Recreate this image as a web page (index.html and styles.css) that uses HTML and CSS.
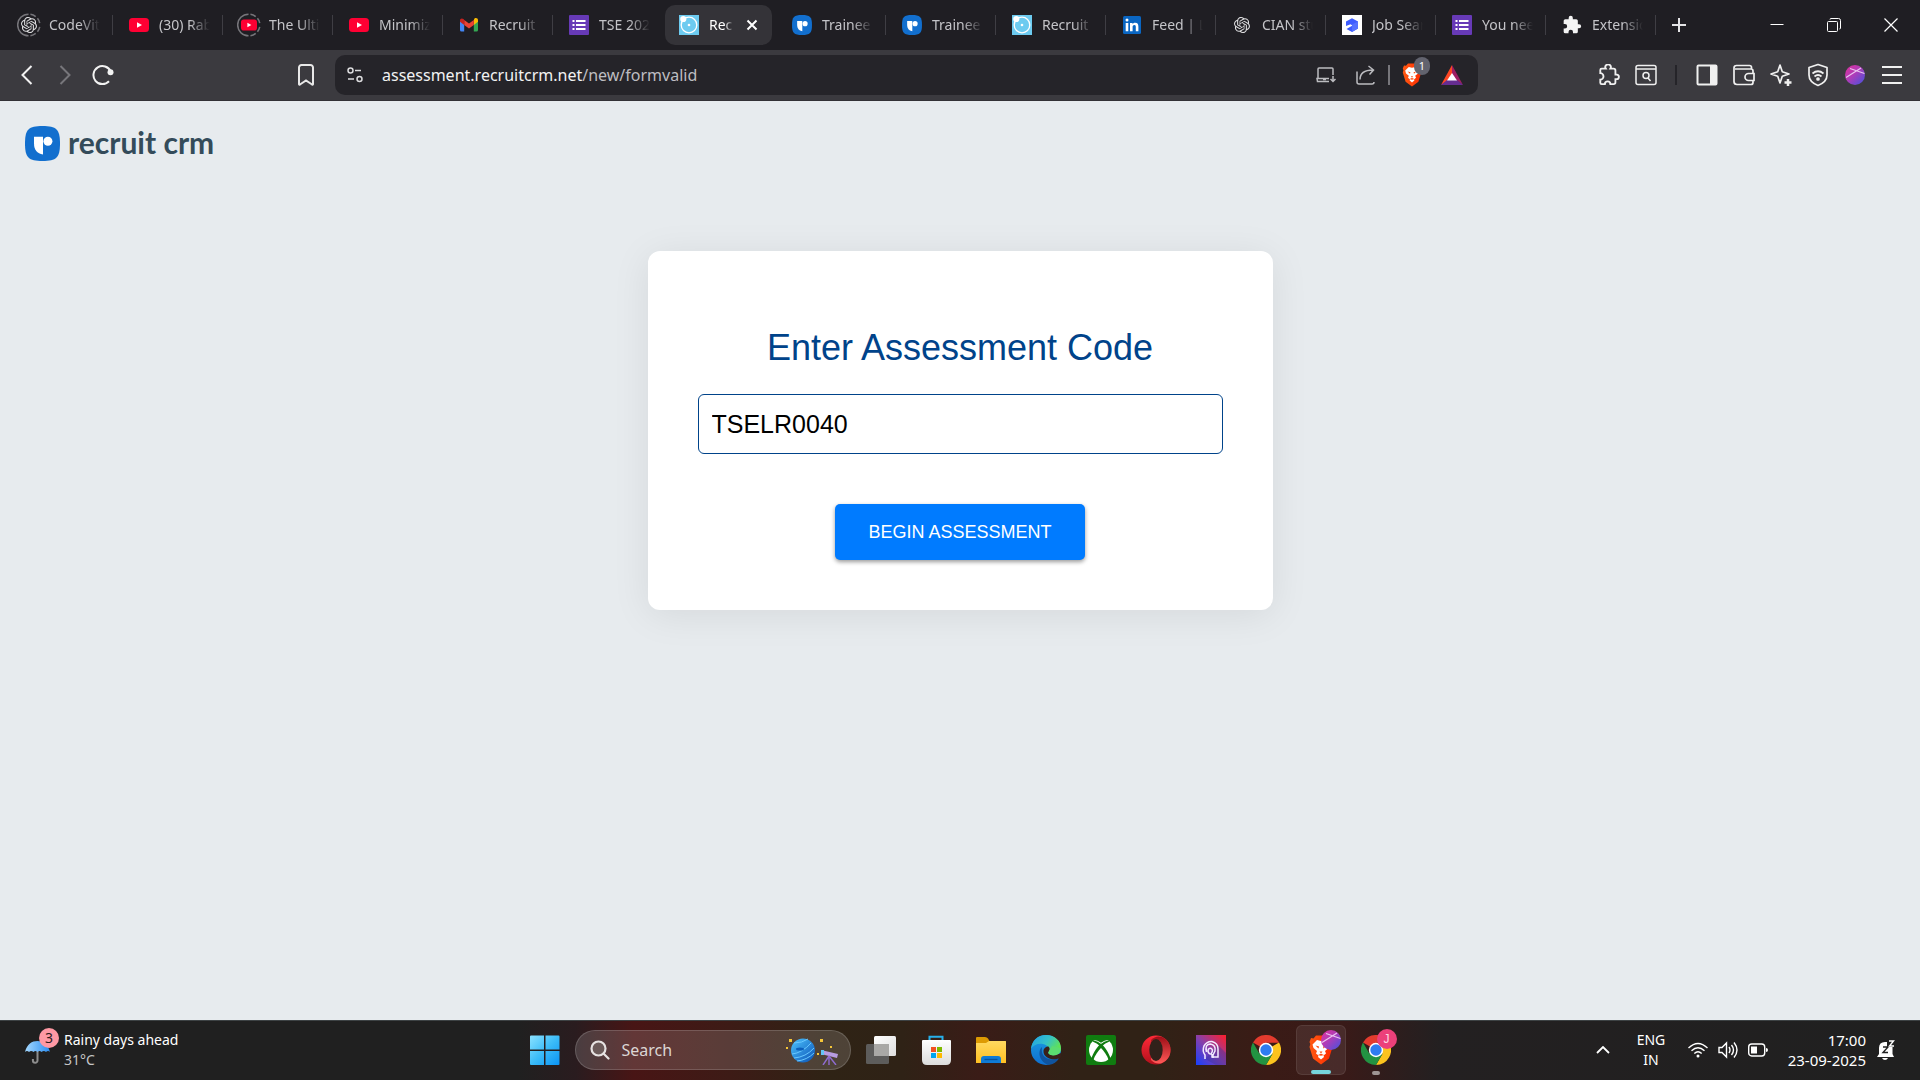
FILE: index.html
```html
<!DOCTYPE html>
<html lang="en">
<head>
<meta charset="utf-8">
<title>Recruit CRM Assessment</title>
<link rel="stylesheet" href="styles.css">
</head>
<body>
<svg class="sprite" aria-hidden="true">
  <defs>
    <linearGradient id="g-win" x1="0" y1="0" x2="1" y2="1"><stop offset="0" stop-color="#8be2ff"/><stop offset=".5" stop-color="#3cbcf8"/><stop offset="1" stop-color="#0a93f5"/></linearGradient>
    <linearGradient id="g-avatar" x1="0" y1="0" x2="1" y2="1"><stop offset="0" stop-color="#e0309a"/><stop offset=".45" stop-color="#b03cb8"/><stop offset="1" stop-color="#3f53e0"/></linearGradient>
    <linearGradient id="g-brave" x1="0" y1="0" x2="1" y2="0"><stop offset="0" stop-color="#ff5a12"/><stop offset="1" stop-color="#ff2a00"/></linearGradient>
    <linearGradient id="g-planet" x1="0" y1="0" x2="1" y2="1"><stop offset="0" stop-color="#4cc4ff"/><stop offset="1" stop-color="#0a50b4"/></linearGradient>
    <linearGradient id="g-umb" x1="0" y1="0" x2="1" y2="0"><stop offset="0" stop-color="#a4d8ff"/><stop offset="1" stop-color="#2b8df0"/></linearGradient>
    <linearGradient id="g-folder" x1="0" y1="0" x2="0" y2="1"><stop offset="0" stop-color="#ffd960"/><stop offset="1" stop-color="#ffbf22"/></linearGradient>
    <linearGradient id="g-bag" x1="0" y1="0" x2="0" y2="1"><stop offset="0" stop-color="#ffffff"/><stop offset="1" stop-color="#dcdcdc"/></linearGradient>
    <linearGradient id="g-edge" x1="0" y1="0" x2="1" y2=".5"><stop offset="0" stop-color="#1f9fe8"/><stop offset=".55" stop-color="#35c1c9"/><stop offset="1" stop-color="#62e44f"/></linearGradient>
    <linearGradient id="g-edge2" x1="0" y1="0" x2="0" y2="1"><stop offset="0" stop-color="#1b9de2"/><stop offset="1" stop-color="#0f6fd0"/></linearGradient>
    <linearGradient id="g-opera" x1="0" y1="0" x2="0" y2="1"><stop offset="0" stop-color="#ff2a38"/><stop offset="1" stop-color="#b3101c"/></linearGradient>
    <linearGradient id="g-opera2" x1="0" y1="0" x2="0" y2="1"><stop offset="0" stop-color="#9c0d16"/><stop offset="1" stop-color="#ff5a58"/></linearGradient>
    <linearGradient id="g-head" x1="0" y1="1" x2="1" y2="0"><stop offset="0" stop-color="#1540ff"/><stop offset=".5" stop-color="#8a3fa8"/><stop offset="1" stop-color="#ff1f2a"/></linearGradient>
    <linearGradient id="g-front" x1="0" y1="0" x2="1" y2="1"><stop offset="0" stop-color="#fff"/><stop offset="1" stop-color="#dedede"/></linearGradient>
  </defs>
  <symbol id="i-openai" viewBox="0 0 24 24"><path fill="#dedee0" d="M22.2819 9.8211a5.9847 5.9847 0 0 0-.5157-4.9108 6.0462 6.0462 0 0 0-6.5098-2.9A6.0651 6.0651 0 0 0 4.9807 4.1818a5.9847 5.9847 0 0 0-3.9977 2.9 6.0462 6.0462 0 0 0 .7427 7.0966 5.98 5.98 0 0 0 .511 4.9107 6.051 6.051 0 0 0 6.5146 2.9001A5.9847 5.9847 0 0 0 13.2599 24a6.0557 6.0557 0 0 0 5.7718-4.2058 5.9894 5.9894 0 0 0 3.9977-2.9001 6.0557 6.0557 0 0 0-.7475-7.0729zm-9.022 12.6081a4.4755 4.4755 0 0 1-2.8764-1.0408l.1419-.0804 4.7783-2.7582a.7948.7948 0 0 0 .3927-.6813v-6.7369l2.02 1.1686a.071.071 0 0 1 .038.052v5.5826a4.504 4.504 0 0 1-4.4945 4.4944zm-9.6607-4.1254a4.4708 4.4708 0 0 1-.5346-3.0137l.142.0852 4.783 2.7582a.7712.7712 0 0 0 .7806 0l5.8428-3.3685v2.3324a.0804.0804 0 0 1-.0332.0615L9.74 19.9502a4.4992 4.4992 0 0 1-6.1408-1.6464zM2.3408 7.8956a4.485 4.485 0 0 1 2.3655-1.9728V11.6a.7664.7664 0 0 0 .3879.6765l5.8144 3.3543-2.0201 1.1685a.0757.0757 0 0 1-.071 0l-4.8303-2.7865A4.504 4.504 0 0 1 2.3408 7.872zm16.5963 3.8558L13.1038 8.364 15.1192 7.2a.0757.0757 0 0 1 .071 0l4.8303 2.7913a4.4944 4.4944 0 0 1-.6765 8.1042v-5.6772a.79.79 0 0 0-.407-.667zm2.0107-3.0231l-.142-.0852-4.7735-2.7818a.7759.7759 0 0 0-.7854 0L9.409 9.2297V6.8974a.0662.0662 0 0 1 .0284-.0615l4.8303-2.7866a4.4992 4.4992 0 0 1 6.6802 4.66zM8.3065 12.863l-2.02-1.1638a.0804.0804 0 0 1-.038-.0567V6.0742a4.4992 4.4992 0 0 1 7.3757-3.4537l-.142.0805L8.704 5.459a.7948.7948 0 0 0-.3927.6813zm1.0976-2.3654l2.602-1.4998 2.6069 1.4998v2.9994l-2.5974 1.4997-2.6067-1.4997Z"/></symbol>
  <symbol id="i-yt" viewBox="0 0 20 20"><rect y="3" width="20" height="14" rx="3.5" fill="#ff0033"/><path d="M8 7.2v5.6l5-2.8z" fill="#fff"/></symbol>
  <symbol id="i-ring" viewBox="0 0 25 25"><path d="M12 1.200A11.300 11.300 0 0 0 12 23.800M14 1.300a11.300 11.300 0 0 1 5.500 2.400M21.300 5.500a11.300 11.300 0 0 1 2.400 5M23.700 14.500a11.300 11.300 0 0 1-2.400 5M19.500 21.300a11.300 11.300 0 0 1-5.500 2.400" fill="none" stroke="#76757a" stroke-width="1.600"/></symbol>
  <symbol id="i-gmail" viewBox="0 0 20 20"><path d="M1 5.500V15a1.500 1.500 0 0 0 1.500 1.500h2.700V8.600z" fill="#4285f4"/><path d="M19 5.500V15a1.500 1.500 0 0 1-1.500 1.500h-2.700V8.600z" fill="#34a853"/><path d="M14.800 5v4.900L19 6.700V5.300c0-2-2.100-2.800-3.500-1.700z" fill="#fbbc04"/><path d="M5.200 9.900V5L10 8.600 14.800 5v4.900L10 13.500z" fill="#ea4335"/><path d="M1 5.300v1.400l4.200 3.200V5l-.7-.9C3 2.800 1 3.500 1 5.300z" fill="#c5221f"/></symbol>
  <symbol id="i-form" viewBox="0 0 20 20"><rect width="20" height="20" rx="1" fill="#673ab7"/><path d="M3.500 5h2v2h-2zM3.500 9h2v2h-2zM3.500 13h2v2h-2zM7 5h9.500v2H7zM7 9h9.500v2H7zM7 13h9.500v2H7z" fill="#fff"/></symbol>
  <symbol id="i-orbit" viewBox="0 0 20 20"><rect width="20" height="20" fill="#6dcbf0"/><circle cx="10" cy="10" r="7.800" fill="none" stroke="#fff" stroke-width="1.300"/><circle cx="10" cy="10" r="1.300" fill="#fff"/><circle cx="4.300" cy="4" r="3.100" fill="#fff"/></symbol>
  <symbol id="i-rcrm" viewBox="0 0 35 35"><path d="M0 17.500C0 3.500 3.500 0 17.500 0S35 3.500 35 17.500 31.500 35 17.500 35 0 31.500 0 17.500z" fill="#126fce"/><path d="M9 10.700h9V28.500C12 27.800 9 23.500 9 17.500z" fill="#fff"/><circle cx="22.900" cy="15.200" r="4.500" fill="#fff"/></symbol>
  <symbol id="i-linkedin" viewBox="0 0 20 20"><rect x="1" y="1" width="18" height="18" rx="1.500" fill="#0a66c2"/><path d="M3.700 8h2.600v8.200H3.700zM8 8h2.500v1.200c.5-.8 1.400-1.400 2.700-1.400 2.500 0 3.200 1.600 3.200 3.900v4.500h-2.600v-4.100c0-1.200-.2-2.100-1.400-2.100s-1.800.9-1.800 2.100v4.100H8z" fill="#fff"/><circle cx="5" cy="5" r="1.500" fill="#fff"/></symbol>
  <symbol id="i-cube" viewBox="0 0 20 20"><rect width="20" height="20" fill="#fff"/><path d="M4 6.500l6-3.300 6 3.300v7l-6 3.500-5.500-3 6-3.500-2-1.300L4 11z" fill="#3d5cff"/><path d="M10 9.500l6-3v7L10 17z" fill="#5471ff"/></symbol>
  <symbol id="i-puzzle" viewBox="0 0 24 24"><path d="M20.500 11H19V7a2 2 0 0 0-2-2h-4V3.500a2.500 2.500 0 0 0-5 0V5H4a2 2 0 0 0-2 2v3.800h1.500a2.700 2.700 0 0 1 0 5.400H2V20a2 2 0 0 0 2 2h3.800v-1.500a2.700 2.700 0 0 1 5.400 0V22H17a2 2 0 0 0 2-2v-4h1.500a2.500 2.500 0 0 0 0-5z"/></symbol>
  <symbol id="i-brave" viewBox="0 0 24 30"><path d="M7 .5h10l2.500 3 2.500-.5 1.500 4-.8 2 .8 3-3.500 11.500L12 29.500 4 23.500.5 12l.8-3-.8-2L2 3l2.500.5z" fill="url(#g-brave)"/><path d="M12 6l4-1 4.500 4.500-1 3.500-3.500 3 1 2.500-2.500 2 .5 1.500-3 2.500-3-2.500.5-1.500L7 18.500 8 16l-3.500-3-1-3.500L8 5z" fill="#fff"/><path d="M6.500 10.500l3.500 1-.5 2zM17.500 10.500l-3.500 1 .5 2zM10.500 16.500h3L12 18.500zM9 20l3-1.200 3 1.200-3 .8z" fill="#ff4a10"/></symbol>
  <symbol id="i-avatar" viewBox="0 0 20 20"><circle cx="10" cy="10" r="10" fill="url(#g-avatar)"/><path d="M1 12.500L16 3M5 3.500l14.500 5" stroke="#e9c3f0" stroke-width="1.200" fill="none"/></symbol>
  <symbol id="i-chrome" viewBox="0 0 30 30"><path d="M15 15L2 7.500A15 15 0 0 1 28 7.500H15z" fill="#e33b2e"/><path d="M15 15L28 7.500A15 15 0 0 1 15 30l6.500-11.200z" fill="#fcc31e"/><path d="M15 15l6.500 3.800L15 30A15 15 0 0 1 2 7.500l6.500 11.200z" fill="#229342"/><path d="M15 7.500h13a15 15 0 0 0-.5-.8L15 5z" fill="#e33b2e"/><circle cx="15" cy="15" r="7.200" fill="#fff"/><circle cx="15" cy="15" r="5.700" fill="#2e7cf0"/></symbol>
</svg>

<header class="browser">
  <div class="tabstrip">
    <nav class="tabs" aria-label="Tabs">
      <a class="tab" href="#"><span class="ring"><svg class="arc"><use href="#i-ring"/></svg><svg class="inner"><use href="#i-openai"/></svg></span><span class="title">CodeVita</span></a>
      <a class="tab" href="#"><svg class="fav"><use href="#i-yt"/></svg><span class="title">(30) Rabb</span></a>
      <a class="tab" href="#"><span class="ring"><svg class="arc"><use href="#i-ring"/></svg><svg class="inner"><use href="#i-yt"/></svg></span><span class="title">The Ultim</span></a>
      <a class="tab" href="#"><svg class="fav"><use href="#i-yt"/></svg><span class="title">Minimize</span></a>
      <a class="tab" href="#"><svg class="fav"><use href="#i-gmail"/></svg><span class="title">Recruit</span></a>
      <a class="tab before-active" href="#"><svg class="fav"><use href="#i-form"/></svg><span class="title">TSE 2025</span></a>
      <div class="tab active"><svg class="fav"><use href="#i-orbit"/></svg><span class="title">Rec</span><button class="tab-close" aria-label="Close tab"><svg viewBox="0 0 12 12"><path d="M1.500 1.500l9 9M10.500 1.500l-9 9" stroke="#fff" stroke-width="2"/></svg></button></div>
      <a class="tab" href="#"><svg class="fav"><use href="#i-rcrm"/></svg><span class="title">Trainee</span></a>
      <a class="tab" href="#"><svg class="fav"><use href="#i-rcrm"/></svg><span class="title">Trainee</span></a>
      <a class="tab" href="#"><svg class="fav"><use href="#i-orbit"/></svg><span class="title">Recruit</span></a>
      <a class="tab" href="#"><svg class="fav"><use href="#i-linkedin"/></svg><span class="title">Feed | Li</span></a>
      <a class="tab" href="#"><svg class="fav pad"><use href="#i-openai"/></svg><span class="title">CIAN stu</span></a>
      <a class="tab" href="#"><svg class="fav"><use href="#i-cube"/></svg><span class="title">Job Sear</span></a>
      <a class="tab" href="#"><svg class="fav"><use href="#i-form"/></svg><span class="title">You need</span></a>
      <a class="tab" href="#"><svg class="fav" fill="#f4f4f4"><use href="#i-puzzle"/></svg><span class="title">Extensions</span></a>
    </nav>
    <button class="new-tab" aria-label="New tab"><svg width="14" height="14" viewBox="0 0 14 14"><path d="M7 0v14M0 7h14" stroke="#e4e4e6" stroke-width="2"/></svg></button>
    <div class="window-controls">
      <button aria-label="Minimize"><svg width="14" height="14" viewBox="0 0 14 14"><path d="M.5 6.500h13" stroke="#fff"/></svg></button>
      <button aria-label="Restore"><svg width="14" height="14" viewBox="0 0 14 14" fill="none" stroke="#fff"><rect x=".5" y="3.500" width="10" height="10" rx="1"/><path d="M3 1.500Q3 .5 4 .5h7.500a2 2 0 0 1 2 2V10q0 1-1 1"/></svg></button>
      <button aria-label="Close"><svg width="14" height="14" viewBox="0 0 14 14"><path d="M.5.500l13 13M13.500.500l-13 13" stroke="#fff" stroke-width="1.200"/></svg></button>
    </div>
  </div>

  <div class="toolbar">
    <div class="nav-buttons">
      <button aria-label="Back"><svg width="12" height="20" viewBox="0 0 12 20"><path d="M10.500 1L1.500 10l9 9" fill="none" stroke="#f2f2f2" stroke-width="2"/></svg></button>
      <button aria-label="Forward"><svg width="12" height="20" viewBox="0 0 12 20"><path d="M1.500 1l9 9-9 9" fill="none" stroke="#77767b" stroke-width="2"/></svg></button>
      <button aria-label="Reload"><svg width="22" height="22" viewBox="0 0 22 22"><path d="M17 17.300A9 9 0 1 1 18.700 7.500" fill="none" stroke="#f2f2f2" stroke-width="2"/><circle cx="18.500" cy="8.300" r="3" fill="#f2f2f2"/></svg></button>
    </div>
    <button class="bookmark" aria-label="Bookmark"><svg width="16" height="22" viewBox="0 0 16 22"><path d="M1 3.500A2.500 2.500 0 0 1 3.500 1h9A2.500 2.500 0 0 1 15 3.500V20q0 1-1 .5L8 16.500l-6 4q-1 .5-1-.5z" fill="none" stroke="#e8e8e8" stroke-width="2"/></svg></button>
    <div class="address">
      <svg width="16" height="16" viewBox="0 0 16 16" fill="none" stroke="#dcdcde" stroke-width="1.500"><circle cx="3.500" cy="3.500" r="2.500"/><path d="M8 3.500h6M1 12h6"/><circle cx="12.500" cy="12" r="2.500"/></svg>
      <a class="url" href="#"><b>assessment.recruitcrm.net</b>/new/formvalid</a>
      <div class="address-actions">
        <button aria-label="Install"><svg width="20" height="16" viewBox="0 0 20 16" fill="none" stroke="#bcbcc0" stroke-width="1.500"><path d="M17 8V2q0-1-1-1H3Q2 1 2 2v9M13 11.500H1l.5 3H13M7 12.500h3M17 9v5M14.500 12l2.500 2.500 2.500-2.500"/></svg></button>
        <button aria-label="Share"><svg width="20" height="20" viewBox="0 0 20 20" fill="none" stroke="#bcbcc0" stroke-width="1.500"><path d="M1 6.500V17q0 2 2 2h13q2 0 2-2M4 14.500C4 9 8 5 17 5M12.500 1L17.500 5l-4 4.500"/></svg></button>
        <i class="divider"></i>
        <button class="shield" aria-label="Brave Shields"><svg width="20" height="24"><use href="#i-brave"/></svg><span class="count">1</span></button>
        <button aria-label="Rewards"><svg width="22" height="20" viewBox="0 0 22 20"><path d="M11 0L0 20l11-7z" fill="#ff4724"/><path d="M11 0l11 20-11-8z" fill="#9e1f63"/><path d="M0 20h22l-6-5H6z" fill="#662d91"/><path d="M11 8l5 7.500H6z" fill="#fff"/></svg></button>
      </div>
    </div>
    <div class="extensions">
      <button aria-label="Extensions"><svg width="22" height="22" viewBox="0 0 24 24" fill="none" stroke="#f0f0f0" stroke-width="2"><path d="M20.500 11.500H19V7a2 2 0 0 0-2-2h-3.500a3 3 0 1 0-5 0H4a1.500 1.500 0 0 0-1.500 1.500V10a3.500 3.500 0 0 1 0 7v3.500A1.500 1.500 0 0 0 4 22h3.500a3 3 0 0 1 6 0H17a2 2 0 0 0 2-2v-3.500h1a2.500 2.500 0 0 0 .5-5z"/></svg></button>
      <button aria-label="Search tabs"><svg width="22" height="22" viewBox="0 0 22 22" fill="none" stroke="#f0f0f0" stroke-width="1.500"><rect x="1" y="1.500" width="20" height="19" rx="2"/><path d="M1 5h20M13 14l2.500 3"/><circle cx="11" cy="11.500" r="3"/></svg></button>
      <i class="divider dark"></i>
      <button aria-label="Sidebar"><svg width="22" height="22" viewBox="0 0 22 22"><rect x="1.500" y="1.500" width="19" height="19" rx="1" fill="none" stroke="#f0f0f0" stroke-width="2"/><path d="M14 2h7v18h-7z" fill="#f0f0f0"/></svg></button>
      <button aria-label="Wallet"><svg width="22" height="22" viewBox="0 0 22 22" fill="none" stroke="#f0f0f0" stroke-width="1.700"><path d="M20 9V7q0-2-2-2H2M18.500 5V3.500q0-2-2-2H3.500q-2.500 0-2.500 2.500v13.500q0 3 3 3h14q2 0 2-2V17"/><path d="M21 9.500h-5.500a3.500 3.500 0 0 0 0 7H21z"/></svg></button>
      <button aria-label="Leo"><svg width="22" height="22" viewBox="0 0 22 22" fill="none" stroke="#f0f0f0" stroke-width="1.700"><path d="M10 1l2.300 6.700L19 10l-6.700 2.300L10 19l-2.300-6.700L1 10l6.700-2.300z" stroke-linejoin="round"/><path d="M18 15v7M14.500 18.500h7" stroke-width="2.500"/></svg></button>
      <button aria-label="VPN"><svg width="22" height="24" viewBox="0 0 22 24" fill="none" stroke="#f0f0f0" stroke-width="1.700"><path d="M11 1.500l9 3V12c0 5-4 8.500-9 10.500C6 20.500 2 17 2 12V4.500z" stroke-linejoin="round"/><path d="M5.500 10.500q5.500-4.500 11 0M7.500 13.500q3.500-3 7 0"/><circle cx="11" cy="16" r="1" fill="#f0f0f0"/></svg></button>
      <button aria-label="Profile"><svg width="20" height="20"><use href="#i-avatar"/></svg></button>
      <button aria-label="Menu"><svg width="20" height="18" viewBox="0 0 20 18"><path d="M0 1h20M0 9h20M0 17h20" stroke="#f0f0f0" stroke-width="2"/></svg></button>
    </div>
  </div>
</header>

<main class="page">
  <a class="logo" href="#"><svg width="35" height="35"><use href="#i-rcrm"/></svg><span>recruit crm</span></a>
  <form class="card">
    <label class="heading" for="code">Enter Assessment Code</label>
    <input class="code" id="code" type="text" value="TSELR0040">
    <button class="begin" type="button">BEGIN ASSESSMENT</button>
  </form>
</main>

<footer class="taskbar">
  <button class="weather">
    <span class="weather-icon"><svg width="26" height="26" viewBox="0 0 26 26"><path d="M12.500 9v13.500a2.300 2.300 0 0 1-4.600 0V21" fill="none" stroke="#8d8d8d" stroke-width="2"/><path d="M0 14C2 6 7 3 12.500 3S23 6 25 14q-2-2-4 0-2-2-4.500 0-2-2-4 0-2-2-4 0-2.500-2-4.500 0-2-2-4 0z" fill="url(#g-umb)"/></svg><span class="badge">3</span></span>
    <span class="stack"><span>Rainy days ahead</span><span class="muted">31°C</span></span>
  </button>
  <nav class="apps" aria-label="Taskbar">
    <button class="app" aria-label="Start"><svg width="30" height="30" viewBox="0 0 30 30"><path d="M0 1.500Q0 .5 1 .5h13v14H0zM15.500.500h13q1 0 1 1v13h-14zM0 16h14v14H1q-1 0-1-1zM15.500 16h14v13q0 1-1 1h-13z" fill="url(#g-win)"/></svg></button>
    <button class="search">
      <svg width="20" height="20" viewBox="0 0 20 20" fill="none" stroke="#e6e2e1" stroke-width="2.200"><circle cx="8.500" cy="8.500" r="7" fill="#6b5a59"/><path d="M13.500 13.500l5 5" stroke-linecap="round"/></svg>
      <span>Search</span>
      <svg class="doodle" width="54" height="30" viewBox="0 0 54 30"><circle cx="18" cy="15.500" r="12" fill="url(#g-planet)"/><path d="M7 19q10-1 19-11M9 23q12-1 20-10M12 26q10-1 17-8M9 8q8 0 14-4" fill="none" stroke="#69c8ff" stroke-width="1"/><ellipse cx="15" cy="14" rx="4" ry="1.500" fill="#0b60bc"/><path d="M4 4h3v3H4zM1 12h2v2H1zM35 4h3v3h-3zM45 11h2v2h-2zM32 18h2v2h-2z" fill="#f5c638"/><path d="M36 15l17 4-1 4-16-4z" fill="#b79ce0"/><path d="M36 15h3v5h-3z" fill="#63c5f5"/><path d="M44 21l-6 9M44 21v9M44 21l7 9" stroke="#8f6cd0" stroke-width="1.400"/></svg>
    </button>
    <button class="app" aria-label="Task view"><svg width="30" height="28" viewBox="0 0 30 28"><rect y="8" width="23" height="20" rx="1.500" fill="#5d5c5b"/><rect x="8" width="22" height="20" rx="1.500" fill="url(#g-front)"/><path d="M8 8h15v12H8z" fill="#a9a8a6"/></svg></button>
    <button class="app" aria-label="Store"><svg width="30" height="30" viewBox="0 0 30 30"><path d="M8.500 7V1.800h13V7" fill="none" stroke="#27b0ea" stroke-width="2"/><path d="M1 6q0-1 1-1h27q1 0 1 1v19q0 5-5 5H6q-5 0-5-5z" fill="url(#g-bag)"/><path d="M10 12h5v5h-5z" fill="#f25022"/><path d="M16 12h5v5h-5z" fill="#7fba00"/><path d="M10 18h5v5h-5z" fill="#00a4ef"/><path d="M16 18h5v5h-5z" fill="#ffb900"/></svg></button>
    <button class="app" aria-label="File Explorer"><svg width="30" height="26" viewBox="0 0 30 26"><path d="M0 1q0-1 1-1h8q2 0 3 1.500L13.500 4H30v8H0z" fill="#dd9a03"/><path d="M0 6h10l3-2h16q1 0 1 1v21H0z" fill="url(#g-folder)"/><path d="M5 26v-4q0-3 3-3h14q3 0 3 3v4z" fill="#0f7bd6"/><path d="M8.500 22.500h13" stroke="#08539c" stroke-width="1.300"/></svg></button>
    <button class="app" aria-label="Edge"><svg width="30" height="30" viewBox="0 0 30 30"><circle cx="15" cy="15" r="15" fill="url(#g-edge2)"/><path d="M0 14C1 5 7 0 15 0c9 0 15 6 15 13 0 5-3.500 7.500-7.500 7.500-4 0-6-1.500-5-3C19 14 17 10 12 9 7 8 2 10 0 14z" fill="url(#g-edge)"/><path d="M11 12c-4 3-4 14 6 17.700 5 .3 9-2.700 11-6.700-8 3.500-19 1-17-11z" fill="#10549f"/><path d="M17.500 11.500c2 2 1.200 4-.3 6 0 3 6 4 12.800.5v4.500q-1 1-2 1c-7 2.500-16-1-15.500-7.500 0-2.500 2.500-4.500 5-4.500z" fill="#39201a"/><path d="M17.200 17.500c1.700 4 9 4 12-.5l.8-4-9-2z" fill="#5bdc70"/></svg></button>
    <button class="app" aria-label="Xbox"><svg width="30" height="30" viewBox="0 0 30 30"><rect width="30" height="30" rx="2" fill="#107c10"/><circle cx="15" cy="15" r="12" fill="#fff"/><path d="M6 5.500Q10 4 15 7.800 20 4 24 5.500L22.500 3 15 1.500 7.500 3z" fill="#107c10"/><path d="M5 25C7 17 12 11 15 8.500 18 11 23 17 25 25l-2 1C21 20 18 16 15 13 12 16 9 20 7 26z" fill="#107c10"/><path d="M8 5.500Q12 6 15 9q3-3 7-3.500l1.500 1Q19 8 16 11h-2Q11 8 6.500 6.500z" fill="#107c10"/></svg></button>
    <button class="app" aria-label="Opera"><svg width="30" height="30" viewBox="0 0 30 30"><circle cx="15" cy="15" r="14.500" fill="url(#g-opera)"/><path d="M10 5q5-5 11-3c5 2 8.500 7 8.500 13s-3.500 11-8.500 13q-6 2-11-3z" fill="url(#g-opera2)"/><ellipse cx="15" cy="15" rx="6.700" ry="11" fill="#30211a"/></svg></button>
    <button class="app" aria-label="Persona"><svg width="30" height="30" viewBox="0 0 30 30"><path d="M0 0h30v30H0z" fill="url(#g-head)"/><path d="M9 24L20 30H30V18L22 10z" fill="#30309a" opacity=".35"/><path d="M9 24v-4q-3-4-1-9 3-5 8-4.500Q22 8 22 14v8h-6v-3M10.500 17q-2-8 4-8 5.500 1 4.500 7l-2 4v3M14 19q-3-2-1.500-5 2.500-2 4 1 0 2-1.500 4z" fill="none" stroke="#f3eaff" stroke-width="1.500"/></svg></button>
    <button class="app" aria-label="Chrome"><svg width="30" height="30"><use href="#i-chrome"/></svg></button>
    <button class="app current" aria-label="Brave"><svg width="26" height="30"><use href="#i-brave"/></svg><svg class="mini" width="20" height="20"><use href="#i-avatar"/></svg></button>
    <button class="app running" aria-label="Chrome profile J"><svg width="30" height="30"><use href="#i-chrome"/></svg><span class="mini initial">J</span></button>
  </nav>
  <div class="tray">
    <button class="chevron" aria-label="Hidden icons"><svg width="14" height="8" viewBox="0 0 14 8"><path d="M1 7l6-6 6 6" fill="none" stroke="#fff" stroke-width="1.800"/></svg></button>
    <button class="stack lang"><span>ENG</span><span>IN</span></button>
    <button class="status" aria-label="Network, volume, battery">
      <svg width="20" height="16" viewBox="0 0 20 16" fill="none" stroke="#fff" stroke-width="1.400"><path d="M.5 6q9.500-9 19 0M3.500 8.800q6.500-6 13 0M6.300 11.500q3.700-3.500 7.400 0"/><circle cx="10" cy="14" r="1.500" fill="#fff" stroke="none"/></svg>
      <svg width="20" height="18" viewBox="0 0 20 18" fill="none" stroke="#fff" stroke-width="1.400"><path d="M1 6.500h3L8.500 2v14L4 11.500H1zM11 6q2 3 0 6M13.500 4q4 5 0 10M16 1.500q6 7.500 0 15"/></svg>
      <svg width="20" height="14" viewBox="0 0 20 14"><rect x=".7" y="1" width="16" height="12" rx="3" fill="none" stroke="#fff" stroke-width="1.400"/><path d="M3 3.500h6v7H3zM18 5q2 0 2 2t-2 2z" fill="#fff"/></svg>
    </button>
    <button class="stack clock"><span>17:00</span><span>23-09-2025</span></button>
    <button class="bell" aria-label="Notifications"><svg width="18" height="20" viewBox="0 0 18 20"><path d="M2 8Q2 2 8 2h2v5h5.500v7l1.500 3H0l2-3z" fill="#fff"/><path d="M5 18h6q-1 2-3 2t-3-2z" fill="#fff"/><path d="M6 7h5l-5 5.500h5" fill="none" stroke="#222" stroke-width="1.400"/><path d="M12 1h4.500L12.500 6H17" fill="none" stroke="#fff" stroke-width="1.400"/></svg></button>
  </div>
</footer>
</body>
</html>
```
FILE: styles.css
```css
* { box-sizing: border-box; }
body {
  margin: 0;
  min-height: 100vh;
  display: flex;
  flex-direction: column;
  background: #e7ebee;
  font-family: "Noto Sans", "Open Sans", sans-serif;
}
button { border: 0; padding: 0; background: none; color: inherit; font: inherit; display: flex; align-items: center; justify-content: center; }
a { color: inherit; text-decoration: none; }
svg { display: block; flex: none; }
.sprite { position: absolute; width: 0; height: 0; }

/* Browser tabs */
.tabstrip { display: flex; height: 50px; padding-left: 3px; background: #1f1e23; }
.tabs { flex: 1; display: flex; align-items: center; min-width: 0; }
.tab {
  flex: 1 1 0;
  min-width: 0;
  height: 20px;
  display: flex;
  align-items: center;
  gap: 10px;
  padding: 0 12px 0 16px;
  border-right: 1px solid #3f3e44;
  color: #c4c4c8;
  font-size: 14px;
  line-height: 20px;
}
.fav { width: 20px; height: 20px; }
.fav.pad { padding: 2px; }
.title {
  flex: 1;
  overflow: hidden;
  white-space: nowrap;
  mask-image: linear-gradient(90deg, #000 60%, transparent);
}
.ring {
  flex: none;
  display: grid;
  place-items: center;
  width: 24px;
  height: 24px;
  margin: 0 -2px;
}
.ring svg { grid-area: 1 / 1; }
.arc { width: 24px; height: 24px; }
.inner { width: 16px; height: 16px; }
.before-active { border-color: transparent; }
.tab.active {
  height: 40px;
  margin: 0 4px 0 2px;
  padding: 0 12px 0 14px;
  border: 0;
  border-radius: 10px;
  background: #343338;
  color: #fff;
}
.tab-close { width: 16px; height: 16px; }
.tab-close svg { width: 12px; height: 12px; }
.new-tab { width: 46px; }
.window-controls { display: flex; padding: 0 1px 0 46px; }
.window-controls button { width: 57px; }

/* Browser toolbar */
.toolbar {
  display: flex;
  align-items: center;
  height: 51px;
  padding: 0 10px 0 8px;
  background: #3b3a3f;
  border-bottom: 1px solid #323136;
}
.nav-buttons { display: flex; }
.nav-buttons button { width: 38px; height: 32px; }
.bookmark { width: 32px; height: 32px; margin-left: 168px; }
.address {
  flex: 1;
  min-width: 0;
  height: 40px;
  margin-left: 13px;
  padding: 0 12px;
  display: flex;
  align-items: center;
  gap: 19px;
  border-radius: 10px;
  background: #252429;
}
.url { flex: 1; color: #bebdc1; font-size: 16px; line-height: 24px; }
.url b { font-weight: 400; color: #f2f2f2; }
.address-actions { display: flex; align-items: center; gap: 12px; }
.address-actions button { min-width: 28px; height: 28px; }
.divider { width: 2px; height: 20px; background: #77767b; margin: 0 -4px; }
.divider.dark { background: #252429; margin: 0 11px; }
.shield { position: relative; }
.count {
  position: absolute;
  left: 16px;
  top: -4px;
  width: 16px;
  height: 18px;
  border-radius: 8px;
  background: #62636e;
  color: #fff;
  font-size: 11px;
  line-height: 18px;
}
.extensions { display: flex; align-items: center; margin-left: 112px; }
.extensions button { width: 37px; height: 32px; }

/* Assessment page */
.page { flex: 1; padding: 25px; }
.logo {
  display: flex;
  gap: 8px;
  width: max-content;
  color: #344b5a;
  font-family: Lato, sans-serif;
  font-size: 30px;
  font-weight: 700;
  line-height: 32px;
}
.card {
  width: 625px;
  max-width: 100%;
  margin: 90px auto 0;
  padding: 72px 50px 50px;
  display: flex;
  flex-direction: column;
  align-items: center;
  border-radius: 12px;
  background: #fff;
  box-shadow: 0 5px 38px rgba(0, 0, 0, .08);
  font-family: "Liberation Sans", Arial, sans-serif;
}
.heading { color: #00438a; font-size: 36px; line-height: 50px; }
.code {
  width: 100%;
  height: 60px;
  margin-top: 21px;
  padding: 0 13px;
  border: 1px solid #00438a;
  border-radius: 6px;
  background: #fff;
  color: #000;
  font: 25px "Liberation Sans", Arial, sans-serif;
}
.begin {
  width: 250px;
  height: 56px;
  margin-top: 50px;
  border-radius: 5px;
  background: #007bff;
  box-shadow: 0 2px 4px rgba(0, 0, 0, .4);
  color: #fff;
  font-size: 18px;
  font-weight: 500;
}

/* Taskbar */
.taskbar {
  height: 60px;
  display: grid;
  grid-template-columns: 1fr auto 1fr;
  align-items: center;
  padding: 0 25px 2px;
  border-top: 1px solid #3d4244;
  background: linear-gradient(90deg, #202020 27%, #2a1c1f 30%, #481515 33%, #3d1b16 38%, #2f2315 43%, #2f2216 47%, #3a1c17 51%, #302216 56%, #302216 60%, #3a1b16 66%, #391a18 70%, #232021 75%, #202020);
  color: #fff;
  font-size: 14px;
  line-height: 20px;
}
.stack { display: flex; flex-direction: column; }
.muted { color: #c6c6c6; }
.weather { justify-self: start; gap: 13px; text-align: left; }
.weather-icon { position: relative; padding-top: 2px; }
.badge {
  position: absolute;
  left: 14px;
  top: -8px;
  width: 20px;
  height: 20px;
  border-radius: 50%;
  background: #ff99a4;
  color: #2b1a1c;
  text-align: center;
}
.apps { display: flex; align-items: center; gap: 5px; }
.app { position: relative; width: 50px; height: 50px; border-radius: 6px; }
.search {
  width: 276px;
  height: 40px;
  padding: 0 11px 0 14px;
  gap: 12px;
  border: 1px solid rgba(255, 255, 255, .16);
  border-radius: 20px;
  background: rgba(255, 255, 255, .15);
  color: #dcd6d4;
  font-size: 16px;
}
.doodle { margin-left: auto; }
.current { background: rgba(255, 255, 255, .08); border: 1px solid rgba(255, 255, 255, .08); }
.current::after, .running::after {
  content: "";
  position: absolute;
  bottom: 0;
  width: 20px;
  height: 4px;
  border-radius: 2px;
  background: #76d5dc;
}
.running::after { width: 8px; background: #9d9594; }
.mini { position: absolute; right: 4px; top: 4px; }
.initial {
  width: 20px;
  height: 20px;
  border-radius: 50%;
  background: #ec407a;
  color: #fbd5e2;
  font-family: "Liberation Sans", Arial, sans-serif;
  font-size: 12px;
}
.tray { justify-self: end; display: flex; align-items: center; }
.chevron { width: 30px; height: 40px; }
.lang { width: 66px; }
.status { gap: 10px; padding-left: 4px; }
.clock { width: 98px; align-items: flex-end; font-size: 15px; }
.bell { margin-left: 11px; }
```
